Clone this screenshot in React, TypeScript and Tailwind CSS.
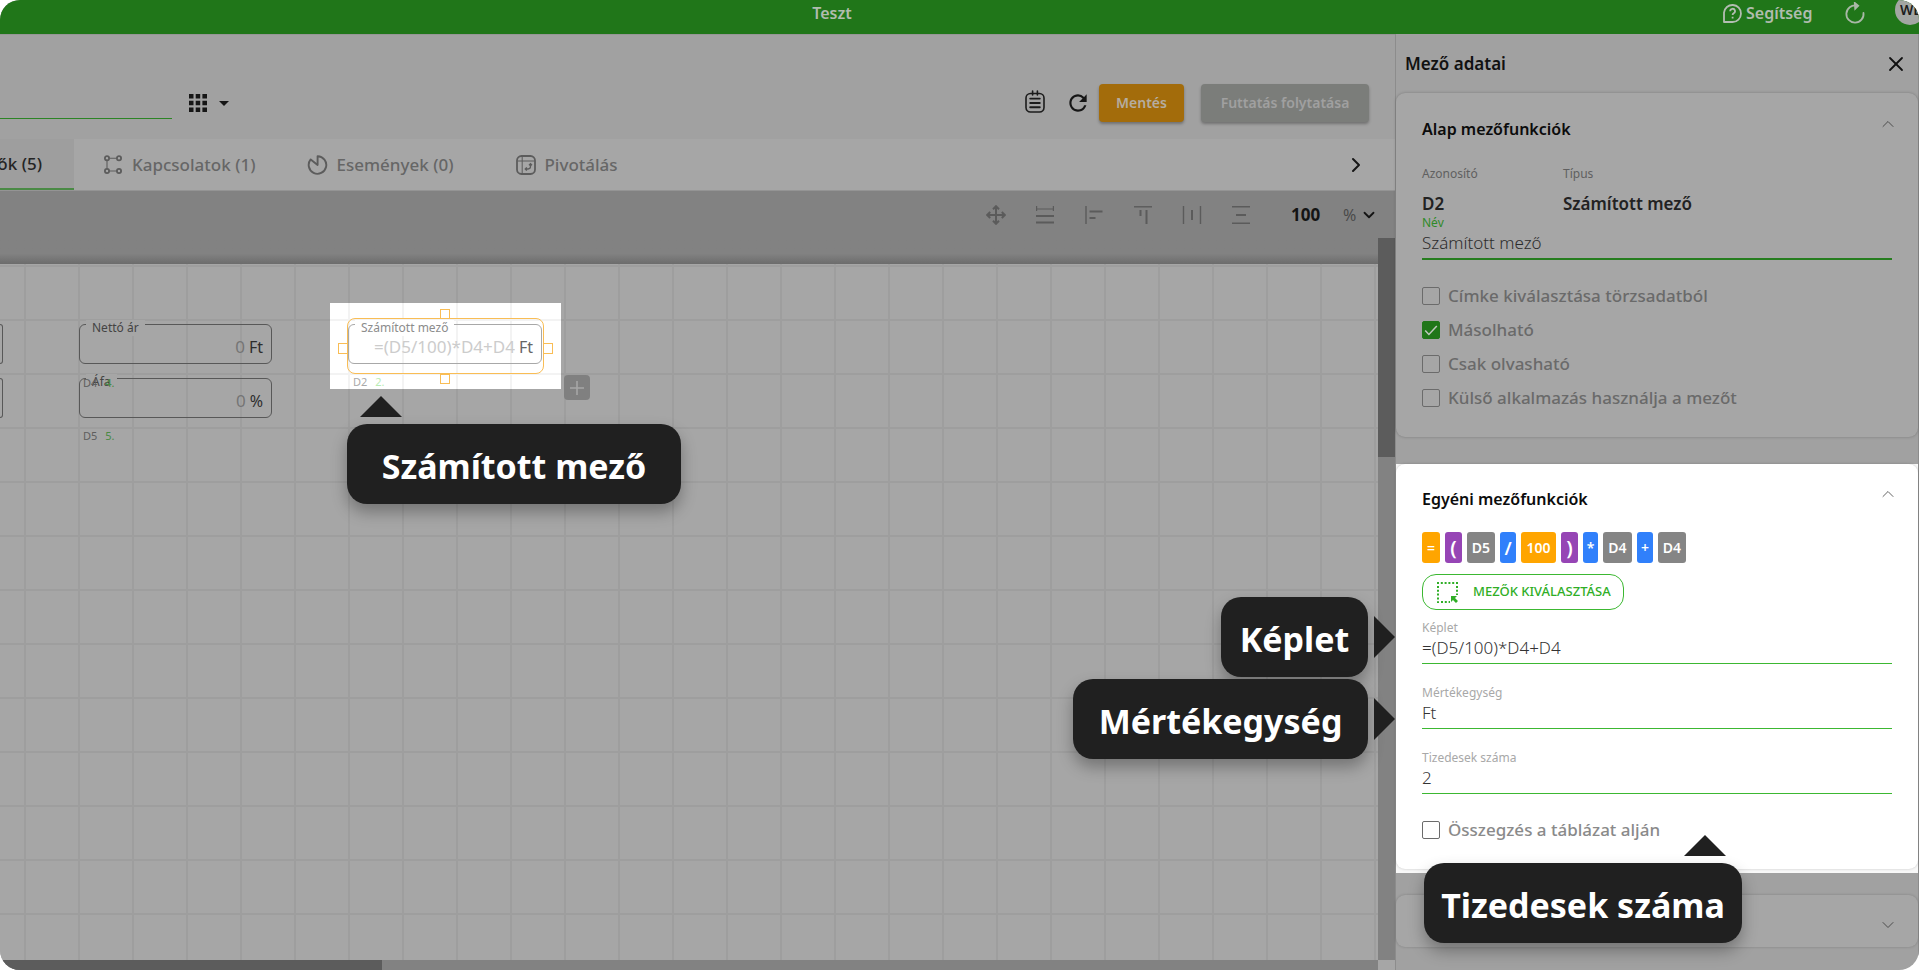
import type { ReactNode } from "react";
import { ChevronDown, ChevronRight, ChevronUp, X } from "lucide-react";
import { MdRefresh } from "react-icons/md";

const chips = [
  { text: "=", style: "w-[18px] bg-[#ffa500] text-sm" },
  { text: "(", style: "w-[17px] bg-[#9645b5] text-xl" },
  { text: "D5", style: "w-[28px] bg-[#858585] text-sm" },
  { text: "/", style: "w-[16px] bg-[#3080fb] text-lg" },
  { text: "100", style: "w-[35px] bg-[#ffa500] text-sm" },
  { text: ")", style: "w-[17px] bg-[#9645b5] text-xl" },
  { text: "*", style: "w-[15px] bg-[#3080fb] text-sm" },
  { text: "D4", style: "w-[29px] bg-[#858585] text-sm" },
  { text: "+", style: "w-[16px] bg-[#3080fb] text-sm" },
  { text: "D4", style: "w-[28px] bg-[#858585] text-sm" },
];

const ClipboardIcon = () => (
  <svg width="20" height="23" viewBox="0 0 20 23" fill="none" stroke="#1c1c1c" strokeWidth="1.6" strokeLinecap="round">
    <rect x="1" y="3.5" width="18" height="18.5" rx="4.5" />
    <path d="M7.6 1v4M12.4 1v4" />
    <path d="M5.2 8.6h9.6M5.2 13h9.6M5.2 17.2h9.6" strokeWidth="1.9" />
  </svg>
);

const RelationIcon = () => (
  <svg width="18" height="19" viewBox="0 0 18 19" fill="none" stroke="#5c5c5c" strokeWidth="1.8">
    <circle cx="3" cy="3.2" r="2.1" />
    <circle cx="15" cy="3.2" r="2.1" />
    <circle cx="3" cy="16" r="2.1" />
    <circle cx="15" cy="16" r="2.1" />
    <path d="M5.5 3.2h7M5.5 16h7M3 5.6v8" strokeWidth="1.1" />
  </svg>
);

const EventIcon = () => (
  <svg width="21" height="20" viewBox="0 0 21 20" fill="none" stroke="#5c5c5c" strokeWidth="1.9" strokeLinejoin="round">
    <path d="M10.6 10V1.2a8.8 8.8 0 1 1-6.9 3.2z" />
  </svg>
);

const PivotIcon = () => (
  <svg width="20" height="20" viewBox="0 0 20 20" fill="none" stroke="#5c5c5c">
    <rect x="1" y="1" width="18" height="18" rx="4.5" strokeWidth="1.8" />
    <path d="M6.2 1.5v17M1.5 6h17" strokeWidth="1" />
    <path d="M14.5 9v2.6c0 1.6-.8 2.4-2.4 2.4H9.5M13 10.2l1.5-1.6 1.5 1.6M10.8 12.4L9.2 14l1.6 1.6" strokeWidth="1.3" />
  </svg>
);

const HelpIcon = () => (
  <svg width="19" height="20" viewBox="0 0 19 20" fill="none" stroke="#b3bdb2" strokeWidth="1.8">
    <path d="M1 19V9.7A8.5 8.5 0 1 1 9.6 19z" strokeLinejoin="round" />
    <path d="M7.2 8.2a2.4 2.4 0 1 1 3.5 2.1c-.8.5-1.1.9-1.1 1.8M9.6 13.8v1.6" />
  </svg>
);

const HeaderRefreshIcon = () => (
  <svg width="21" height="22" viewBox="0 0 21 22" fill="none" stroke="#a9b8a7" strokeWidth="1.8" strokeLinecap="round">
    <path d="M12.5 3.6a8.6 8.6 0 1 0 7 7.4" />
    <path d="M10.8 1l3.4 2.8-3 3z" fill="#a9b8a7" />
  </svg>
);

const CanvasTool = ({ label, children }: { label: string; children: ReactNode }) => (
  <button aria-label={label} className="flex w-5 justify-center">
    <svg width="20" height="20" viewBox="0 0 20 20" fill="none" stroke="#5b5b5b" strokeWidth="2">
      {children}
    </svg>
  </button>
);

const Field = ({ label, value, unit, name }: { label: string; value: string; unit: string; name: string }) => (
  <div className="relative flex h-10 w-[193px] items-end rounded-md border border-[#585858] px-2 pb-1">
    <label htmlFor={name} className="absolute -top-[5px] left-1.5 bg-[#a6a6a6] px-1.5 text-xs leading-4 text-[#444]">
      {label}
    </label>
    <input id={name} defaultValue={value} className="w-full min-w-0 bg-transparent text-right text-[17px] leading-6 text-[#757575] outline-none" />
    <span className="pl-1 text-base leading-6 text-[#2e2e2e]">{unit}</span>
  </div>
);

const Callout = ({ text, width }: { text: string; width: string }) => (
  <div className={`${width} flex h-20 items-center justify-center rounded-[20px] bg-[#202020] pt-1 text-[34px] font-bold whitespace-nowrap text-white shadow-[0_8px_16px_rgba(0,0,0,0.3)]`}>
    {text}
  </div>
);

const ArrowUp = ({ className }: { className: string }) => (
  <svg className={className} width="42" height="21" viewBox="0 0 42 21" fill="#202020">
    <path d="M0 21L21 0l21 21z" />
  </svg>
);

const ArrowRight = () => (
  <svg width="21" height="42" viewBox="0 0 21 42" fill="#202020">
    <path d="M0 0l21 21L0 42z" />
  </svg>
);

const Check = ({ id, label, checked, text }: { id: string; label: string; checked?: boolean; text: string }) => (
  <div className="flex h-[18px] items-center gap-2">
    <span className="relative flex">
      <input
        id={id}
        type="checkbox"
        defaultChecked={checked}
        className="peer size-[18px] appearance-none rounded-[2px] border-[1.5px] border-[#6b6b6b] checked:border-[#207619] checked:bg-[#207619]"
      />
      <svg className="pointer-events-none absolute inset-0 hidden peer-checked:block" width="18" height="18" viewBox="0 0 18 18" fill="none" stroke="#c0c8bf" strokeWidth="1.5">
        <path d="M3.2 9.6l3.7 3.9L14.8 5" />
      </svg>
    </span>
    <label htmlFor={id} className={`${text} text-[17px] leading-[18px] font-medium`}>
      {label}
    </label>
  </div>
);

const PanelInput = ({ id, label, value }: { id: string; label: string; value: string }) => (
  <div>
    <label htmlFor={id} className="block text-xs leading-4 text-[#a8a8a8]">
      {label}
    </label>
    <input id={id} defaultValue={value} className="block h-7 w-full border-b border-[#3cb832] pb-1 text-[17px] font-light text-[#333] outline-none" />
  </div>
);

export default function App() {
  return (
    <div className="h-screen bg-white font-['Noto_Sans',sans-serif]">
      <div className="flex h-full flex-col overflow-hidden rounded-[20px] bg-[#a1a1a1]">
        <header className="z-10 flex h-[34px] shrink-0 items-center overflow-hidden bg-[#207619] pb-2">
          <h1 className="flex-1 text-center text-base font-semibold text-[#b0bcae]">Teszt</h1>
          <div className="flex w-[255px] shrink-0 items-center pl-[59px]">
            <a href="#help" className="flex items-center gap-1 text-base font-semibold text-[#b0bcae]">
              <HelpIcon />
              Segítség
            </a>
            <button aria-label="Frissítés" className="ml-8">
              <HeaderRefreshIcon />
            </button>
            <span className="-mt-1.5 ml-[30px] flex size-[30px] shrink-0 items-center justify-center rounded-full bg-[#a3a6a3] text-sm font-semibold text-[#1c1c1c]">
              WE
            </span>
          </div>
        </header>

        <div className="flex min-h-0 flex-1">
          <main className="relative flex min-w-0 flex-1 flex-col">
            <div className="flex h-[105px] shrink-0 items-end border-t border-[#969696] pr-[26px] pb-4">
              <div className="flex h-10 w-full items-center">
                <input aria-label="Név" className="h-8 w-[172px] border-b border-[#2c8425] outline-none" />
                <button aria-label="Nézet" className="ml-[17px] flex items-center gap-3">
                  <svg width="18" height="18" viewBox="0 0 18 18" fill="#161616">
                    <path d="M0 0h4.5v4.5H0zM6.7 0h4.5v4.5H6.7zM13.4 0H18v4.5h-4.6zM0 6.7h4.5v4.5H0zM6.7 6.7h4.5v4.5H6.7zM13.4 6.7H18v4.5h-4.6zM0 13.4h4.5V18H0zM6.7 13.4h4.5V18H6.7zM13.4 13.4H18V18h-4.6z" />
                  </svg>
                  <svg width="10" height="5" viewBox="0 0 10 5" fill="#161616">
                    <path d="M0 0h10L5 5z" />
                  </svg>
                </button>
                <div className="ml-auto flex items-center">
                  <button aria-label="Napló" className="pb-1">
                    <ClipboardIcon />
                  </button>
                  <button aria-label="Frissítés" className="ml-5">
                    <MdRefresh size={26} color="#161616" />
                  </button>
                  <button className="ml-2 h-[38px] w-[85px] rounded-[4px] bg-[#a36c0b] text-sm font-semibold text-[#b5ada0] shadow-[0_2px_3px_rgba(0,0,0,0.3)]">
                    Mentés
                  </button>
                  <button className="ml-[17px] h-[38px] w-[168px] rounded-[4px] bg-[#7b7d7a] text-sm font-semibold whitespace-nowrap text-[#a0a0a0] shadow-[0_2px_3px_rgba(0,0,0,0.3)]">
                    Futtatás folytatása
                  </button>
                </div>
              </div>
            </div>

            <nav className="flex h-[52px] shrink-0 items-stretch border-b border-[#949494] bg-[#a6a6a6] text-[17px] font-medium text-[#666]">
              <button className="flex w-[74px] items-center justify-end overflow-hidden border-b-2 border-[#4a8a45] bg-[#9e9e9e] pr-8 whitespace-nowrap text-[#242424]">
                ők (5)
              </button>
              <button className="ml-[30px] flex items-center gap-2.5">
                <RelationIcon />
                Kapcsolatok (1)
              </button>
              <button className="ml-[52px] flex items-center gap-2">
                <EventIcon />
                Események (0)
              </button>
              <button className="ml-[63px] flex items-center gap-2">
                <PivotIcon />
                Pivotálás
              </button>
              <button aria-label="Következő" className="ml-auto pr-[27px] text-[#161616]">
                <ChevronRight size={24} strokeWidth={2} />
              </button>
            </nav>

            <div className="flex h-[47px] shrink-0 items-start justify-end bg-[#828282] pt-3 pr-[17px]">
              <div className="flex h-6 items-center gap-[29px]">
                <CanvasTool label="Mozgatás">
                  <path d="M10 1.5v17M1.5 10h17M7 4.2l3-3 3 3M7 15.8l3 3 3-3M4.2 7l-3 3 3 3M15.8 7l3 3-3 3" />
                </CanvasTool>
                <CanvasTool label="Szélesség">
                  <path d="M1 11h18M1 17.5h18" />
                  <path d="M1.6 1v5M18.4 1v5M1.6 4h16.8" strokeWidth="1.2" />
                </CanvasTool>
                <CanvasTool label="Balra igazítás">
                  <path d="M2 1v18" strokeWidth="1.4" />
                  <path d="M5.5 6.5h13M5.5 13h6" />
                </CanvasTool>
                <CanvasTool label="Felülre igazítás">
                  <path d="M1 1.8h18" strokeWidth="1.4" />
                  <path d="M7.5 5v6M13.5 5v14" />
                </CanvasTool>
                <CanvasTool label="Vízszintes elosztás">
                  <path d="M1.5 1v18M18.5 1v18" strokeWidth="1.4" />
                  <path d="M10 5v10" />
                </CanvasTool>
                <CanvasTool label="Függőleges elosztás">
                  <path d="M1 1.8h18M1 18.2h18" strokeWidth="1.4" />
                  <path d="M5 10h10" />
                </CanvasTool>
              </div>
              <button className="ml-10 flex h-6 items-center text-[#141414]">
                <span className="w-[52px] text-left text-[17px] leading-6 font-bold">100</span>
                <span className="w-[17px] text-left text-base leading-6 text-[#4a4a4a]">%</span>
                <ChevronDown size={18} strokeWidth={2.4} />
              </button>
            </div>

            <div className="flex min-h-0 flex-1">
              <div className="flex min-w-0 flex-1 flex-col">
                <div className="h-[26px] shrink-0 bg-linear-to-b from-[#828282] from-60% to-[#6c6c6c]" />
                <div className="relative min-h-0 flex-1 overflow-hidden bg-[#a6a6a6] bg-[linear-gradient(to_right,#9e9e9e_2px,transparent_2px),linear-gradient(to_bottom,#9e9e9e_2px,transparent_2px)] bg-size-[54px_54px] bg-position-[24px_1px]">
                  <div className="absolute top-[60px] left-0 h-10 w-[3px] rounded-r-md border border-l-0 border-[#585858]" />
                  <div className="absolute top-[114px] left-0 h-10 w-[3px] rounded-r-md border border-l-0 border-[#585858]" />

                  <div className="absolute top-[60px] left-[79px] flex flex-col gap-[14px]">
                    <Field name="netto" label="Nettó ár" value="0" unit="Ft" />
                    <Field name="afa" label="Áfa" value="0" unit="%" />
                  </div>
                  <p className="absolute top-[111px] left-[83px] flex gap-2 text-[11px] leading-4 text-[#5e5e5e]">
                    D4 <span className="text-[#4a8a45]">4.</span>
                  </p>
                  <p className="absolute top-[164px] left-[83px] flex gap-2 text-[11px] leading-4 text-[#5e5e5e]">
                    D5 <span className="text-[#4a8a45]">5.</span>
                  </p>

                  {/* selected node */}
                  <div className="absolute top-[39px] left-[330px] h-[86px] w-[231px] bg-white bg-[linear-gradient(to_right,#f3f3f3_2px,transparent_2px),linear-gradient(to_bottom,#f3f3f3_2px,transparent_2px)] bg-size-[54px_54px] bg-position-[18px_16px]">
                    <div className="absolute top-[21px] left-[18px] flex h-10 w-[194px] items-end rounded-md border border-[#a8a8a8] px-2 pb-1">
                      <label htmlFor="calc" className="absolute -top-[5px] left-1.5 bg-white px-1.5 text-xs leading-4 text-[#8c8c8c]">
                        Számított mező
                      </label>
                      <input id="calc" defaultValue="=(D5/100)*D4+D4" className="w-full min-w-0 bg-transparent text-right text-[17px] leading-6 text-[#ccc] outline-none" />
                      <span className="pl-1 text-base leading-6 text-[#666]">Ft</span>
                    </div>
                    <div className="absolute top-[15px] left-[17px] h-14 w-[197px] rounded-lg border border-[#f9bd55]" />
                    <div className="absolute top-[6px] left-[110px] h-[10px] w-[10px] border border-[#f9bd55]" />
                    <div className="absolute top-[71px] left-[110px] h-[10px] w-[10px] border border-[#f9bd55]" />
                    <div className="absolute top-[40px] left-[8px] h-[11px] w-[10px] border border-[#f9bd55]" />
                    <div className="absolute top-[40px] left-[213px] h-[11px] w-[10px] border border-[#f9bd55]" />
                    <p className="absolute top-[71px] left-[23px] flex gap-2 text-[11px] leading-4 text-[#aaa]">
                      D2 <span className="text-[#b8ecb3]">2.</span>
                    </p>
                  </div>

                  <button aria-label="Új mező" className="absolute top-[111px] left-[564px] flex h-[25px] w-[26px] items-center justify-center rounded-[4px] bg-[#808080]">
                    <svg width="14" height="14" viewBox="0 0 14 14" stroke="#a6a6a6" strokeWidth="1.6">
                      <path d="M7 0v14M0 7h14" />
                    </svg>
                  </button>

                  <div className="absolute top-[132px] left-[347px] flex flex-col gap-[7px]">
                    <ArrowUp className="ml-[13px]" />
                    <Callout text="Számított mező" width="w-[334px]" />
                  </div>
                </div>
                <div className="h-[10px] shrink-0 bg-[#828282]">
                  <div className="h-full w-[382px] bg-[#5c5c5c]" />
                </div>
              </div>
              <div className="flex w-[17px] shrink-0 flex-col bg-[#828282]">
                <div className="h-[219px] bg-[#5c5c5c]" />
                <div className="mt-auto h-[10px] bg-[#a6a6a6]" />
              </div>
            </div>

            <div className="absolute top-[563px] right-0 flex flex-col items-end gap-0.5">
              <div className="flex items-center gap-1.5">
                <Callout text="Képlet" width="w-[147px]" />
                <ArrowRight />
              </div>
              <div className="flex items-center gap-1.5">
                <Callout text="Mértékegység" width="w-[295px]" />
                <ArrowRight />
              </div>
            </div>
          </main>

          <aside className="relative flex w-[524px] shrink-0 flex-col border-x border-[#8c8c8c]">
            <div className="flex h-[59px] shrink-0 items-center justify-between pr-2.5 pl-[9px]">
              <h2 className="text-[17px] font-semibold text-[#111]">Mező adatai</h2>
              <button aria-label="Bezárás" className="text-[#111]">
                <X size={24} strokeWidth={1.8} />
              </button>
            </div>

            <section className="rounded-[9px] bg-[#a6a6a6] px-[26px] pb-[30px] shadow-[0_0_3px_rgba(0,0,0,0.25)]">
              <div className="flex h-[68px] items-center justify-between pt-1">
                <h3 className="text-base font-semibold text-[#0c0c0c]">Alap mezőfunkciók</h3>
                <ChevronUp size={20} strokeWidth={1.2} className="-mr-1.5 mb-2.5 text-[#4d4d4d]" />
              </div>
              <dl className="flex pt-[5px]">
                <div className="w-[141px]">
                  <dt className="text-xs leading-4 text-[#606060]">Azonosító</dt>
                  <dd className="mt-3 text-[17px] leading-5 font-semibold text-[#222]">D2</dd>
                </div>
                <div>
                  <dt className="text-xs leading-4 text-[#606060]">Típus</dt>
                  <dd className="mt-3 text-[17px] leading-5 font-semibold text-[#222]">Számított mező</dd>
                </div>
              </dl>
              <label htmlFor="nev" className="mt-px block text-xs leading-4 text-[#2f8a28]">
                Név
              </label>
              <input id="nev" defaultValue="Számított mező" className="block h-[29px] w-full border-b-2 border-[#267d1f] pb-1 text-[17px] font-light text-[#2c2c2c] outline-none" />
              <div className="mt-[27px] flex flex-col gap-4">
                <Check id="cimke" label="Címke kiválasztása törzsadatból" text="text-[#6a6a6a]" />
                <Check id="masolhato" label="Másolható" checked text="text-[#6a6a6a]" />
                <Check id="olvashato" label="Csak olvasható" text="text-[#6a6a6a]" />
                <Check id="kulso" label="Külső alkalmazás használja a mezőt" text="text-[#6a6a6a]" />
              </div>
            </section>

            <div className="mt-[27px] bg-[#f8f8f8] pb-1">
              <section className="rounded-[9px] bg-white px-[26px] pb-[30px] shadow-[0_0_3px_rgba(0,0,0,0.2)]">
                <div className="flex h-[68px] items-center justify-between pt-0.5">
                  <h3 className="text-base font-semibold text-[#0c0c0c]">Egyéni mezőfunkciók</h3>
                  <ChevronUp size={20} strokeWidth={1.2} className="-mr-1.5 mb-2.5 text-[#666]" />
                </div>
                <div className="flex gap-[5px]">
                  {chips.map((chip, i) => (
                    <span key={i} className={`${chip.style} flex h-[31px] items-center justify-center rounded-[3px] font-semibold text-white`}>
                      {chip.text}
                    </span>
                  ))}
                </div>
                <button className="mt-[11px] flex h-9 w-[202px] items-center gap-[15px] rounded-[14px] border border-[#3cb832] pl-3.5 text-[13px] font-medium whitespace-nowrap text-[#2fae26]">
                  <svg width="21" height="21" viewBox="0 0 21 21" fill="none" stroke="#2fae26" strokeWidth="2">
                    <path d="M0 1h21M1 4v17M20 4v9M4 20h9" strokeDasharray="2 1.8" />
                    <path d="M14 14h6l-2 2 3 3-2 2-3-3-2 2z" fill="#2fae26" stroke="none" />
                  </svg>
                  MEZŐK KIVÁLASZTÁSA
                </button>
                <div className="mt-2.5 mb-[27px] flex flex-col gap-[21px]">
                  <PanelInput id="keplet" label="Képlet" value="=(D5/100)*D4+D4" />
                  <PanelInput id="mertek" label="Mértékegység" value="Ft" />
                  <PanelInput id="tizedes" label="Tizedesek száma" value="2" />
                </div>
                <Check id="osszegzes" label="Összegzés a táblázat alján" text="text-[#8a8a8a]" />
              </section>
            </div>

            <section className="mt-[22px] flex h-[52px] shrink-0 items-center justify-end rounded-[9px] bg-[#a6a6a6] pt-2 pr-5 shadow-[0_0_3px_rgba(0,0,0,0.2)]">
              <ChevronDown size={20} strokeWidth={1.2} className="text-[#4d4d4d]" />
            </section>

            <div className="absolute top-[801px] left-7 flex flex-col gap-[7px]">
              <ArrowUp className="ml-[260px]" />
              <Callout text="Tizedesek száma" width="w-[318px]" />
            </div>
          </aside>
        </div>
      </div>
    </div>
  );
}
